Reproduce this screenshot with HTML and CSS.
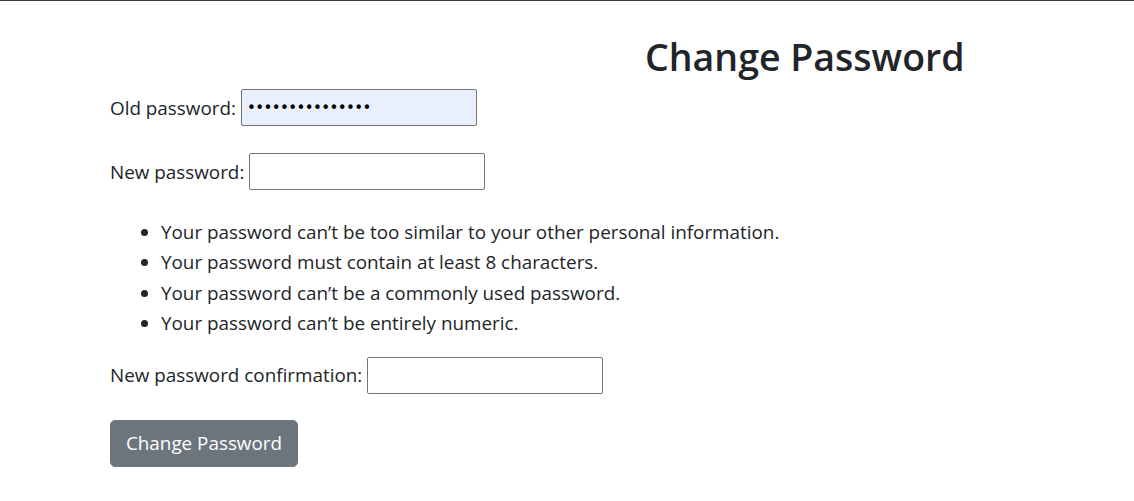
FILE: index.html
```html
<!DOCTYPE html>
<html>
<head>
<meta charset="utf-8">
<link rel="stylesheet" href="styles.css">
</head>
<body>
<div class="topbar"></div>
<main class="container">
  <h2 class="title">Change Password</h2>
  <form class="form">
    <div class="row row-old"><label for="old">Old password:</label><input id="old" class="field autofill" type="password" value="abcdefghijklmno"></div>
    <div class="row row-new"><label for="new1">New password:</label><input id="new1" class="field" type="password"></div>
    <ul class="help">
      <li>Your password can’t be too similar to your other personal information.</li>
      <li>Your password must contain at least 8 characters.</li>
      <li>Your password can’t be a commonly used password.</li>
      <li>Your password can’t be entirely numeric.</li>
    </ul>
    <div class="row row-confirm"><label for="new2">New password confirmation:</label><input id="new2" class="field" type="password"></div>
    <div class="actions"><button type="button" class="btn">Change Password</button></div>
  </form>
</main>
</body>
</html>
```

FILE: styles.css
```css
* { box-sizing: border-box; }
html, body { margin: 0; padding: 0; }
body {
  font-family: "Open Sans", "Noto Sans", sans-serif;
  font-size: 18.85px;
  line-height: 30px;
  color: #212529;
  background: #fff;
}
.topbar { height: 1px; background: #343a40; }
.container { padding: 0 0 0 110px; }
.title {
  margin: 32px 0 0 535px;
  font-size: 37.5px;
  font-weight: 600;
  line-height: 48px;
  color: #212529;
}
.form { display: flex; flex-direction: column; margin-top: 8px; }
.row { display: flex; align-items: center; height: 37px; }
.row label { margin-right: 5px; }
.row-new { margin-top: 27px; }
.row-confirm { margin-top: 18px; }
.field {
  width: 236px;
  height: 37px;
  border: 1px solid #767676;
  border-radius: 2px;
  background: #fff;
  font-size: 15px;
  padding: 0 5px;
  color: #000;
  font-family: "DejaVu Sans", sans-serif;
  letter-spacing: -0.6px;
}
.field.autofill { background: #e8f0fe; }
.help { margin: 27px 0 0 0; padding-left: 51px; line-height: 30.4px; }
.actions { margin-top: 26px; }
.btn {
  height: 47px;
  width: 188px;
  background: #6c757d;
  color: #fff;
  border: 1px solid #6c757d;
  border-radius: 5px;
  font-family: "Open Sans", "Noto Sans", sans-serif;
  font-size: 18.85px;
  padding: 0;
}
```
